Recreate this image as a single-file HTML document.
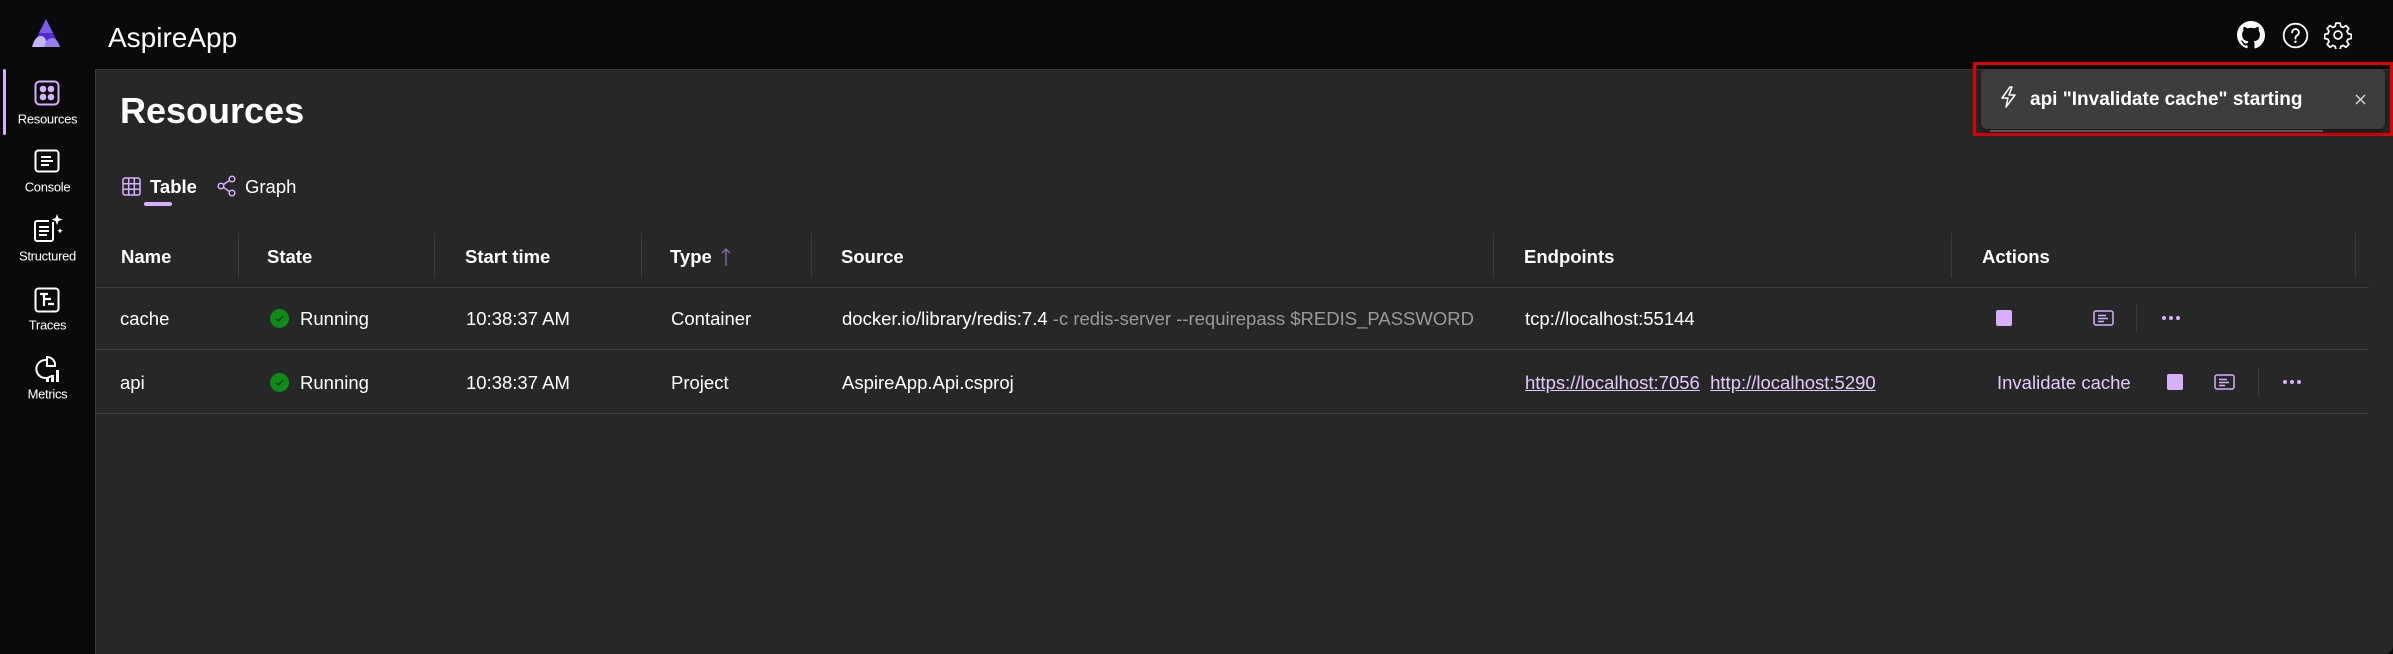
<!DOCTYPE html>
<html><head><meta charset="utf-8">
<style>
*{box-sizing:border-box;margin:0;padding:0}
body{width:2393px;height:654px;background:#0a0a0a;font-family:"Liberation Sans",sans-serif;color:#fff;position:relative;overflow:hidden}
.abs{position:absolute}
.panel{left:95px;top:69px;width:2298px;height:585px;background:#272727;border-left:1px solid #3a3a3a;border-top:1px solid #3a3a3a;border-radius:0 0 8px 0}
.t{font-size:18.5px;color:#fff;white-space:nowrap;transform:translateY(-50%)}
.t.side{width:95px;text-align:center;font-size:13px;color:#fff;left:0;letter-spacing:-0.3px}
.h{font-weight:bold}
.hl{height:1px;background:#3b3b3b;left:96px;width:2273px}
.vd{width:1px;background:#3b3b3b;top:233px;height:45px}
.sq{width:16px;height:16px;background:#d6b0ff;border-radius:2px}
.dot{width:4px;height:4px;border-radius:2px;background:#d6b0ff}
a{color:#e4c8ff;text-decoration:underline}
</style></head><body>
<svg class="abs" style="left:30px;top:18px" width="32" height="30" viewBox="0 0 32 30"><polygon points="16,1 2,29 30,29" fill="#512bd4"/><polygon points="16,1 9,15 23,15" fill="#7b5ce6"/><path d="M2,29 Q5,18 11,18 Q16,18 18,29Z" fill="#c7b6f7"/><path d="M14,29 Q17,20 22,20 Q27,20 30,29Z" fill="#9a7ef0"/></svg>
<div class="abs t" style="left:108px;top:38px;font-size:28px">AspireApp</div>
<svg class="abs" style="left:2237px;top:21px" width="28" height="28" viewBox="0 0 16 16"><path fill="#fff" d="M8 0C3.58 0 0 3.58 0 8c0 3.54 2.29 6.53 5.47 7.59.4.07.55-.17.55-.38v-1.33c-2.23.48-2.7-1.07-2.7-1.07-.36-.92-.89-1.17-.89-1.17-.73-.5.06-.49.06-.49.8.06 1.23.83 1.23.83.72 1.23 1.88.87 2.34.67.07-.52.28-.87.51-1.07-1.78-.2-3.64-.89-3.64-3.95 0-.87.31-1.59.82-2.15-.08-.2-.36-1.02.08-2.12 0 0 .67-.21 2.2.82.64-.18 1.32-.27 2-.27s1.36.09 2 .27c1.53-1.04 2.2-.82 2.2-.82.44 1.1.16 1.92.08 2.12.51.56.82 1.27.82 2.15 0 3.07-1.87 3.75-3.65 3.95.29.25.54.73.54 1.48v2.2c0 .21.15.46.55.38A8 8 0 0016 8c0-4.42-3.58-8-8-8z"/></svg>
<svg class="abs" style="left:2282px;top:22px" width="27" height="27" viewBox="0 0 24 24"><circle cx="12" cy="12" r="10.5" fill="none" stroke="#fff" stroke-width="1.6"/><path d="M9 9.3a3 3 0 1 1 4.3 2.7c-.9.5-1.3 1-1.3 2v.8" fill="none" stroke="#fff" stroke-width="1.6" stroke-linecap="round"/><circle cx="12" cy="17.6" r="1.1" fill="#fff"/></svg>
<svg class="abs" style="left:2324px;top:21px" width="28" height="28" viewBox="0 0 24 24"><path fill="none" stroke="#fff" stroke-width="1.5" stroke-linejoin="round" d="M10.2 1.8h3.6l.6 2.8 2 .9 2.4-1.6 2.5 2.5-1.6 2.4.9 2 2.8.6v3.6l-2.8.6-.9 2 1.6 2.4-2.5 2.5-2.4-1.6-2 .9-.6 2.8h-3.6l-.6-2.8-2-.9-2.4 1.6-2.5-2.5 1.6-2.4-.9-2-2.8-.6v-3.6l2.8-.6.9-2-1.6-2.4 2.5-2.5 2.4 1.6 2-.9z"/><circle cx="12" cy="12" r="3.4" fill="none" stroke="#fff" stroke-width="1.5"/></svg>
<div class="abs" style="left:3px;top:69px;width:3px;height:66px;background:#d6b0ff;border-radius:2px"></div>
<svg class="abs" style="left:34px;top:80px" width="26" height="26" viewBox="0 0 26 26"><rect x="1.5" y="1.5" width="23" height="23" rx="4" fill="none" stroke="#d6b0ff" stroke-width="2"/><circle cx="9" cy="9" r="3.3" fill="#d6b0ff"/><circle cx="17" cy="9" r="3.3" fill="#d6b0ff"/><circle cx="9" cy="17" r="3.3" fill="#d6b0ff"/><circle cx="17" cy="17" r="3.3" fill="#d6b0ff"/></svg>
<div class="abs t side" style="top:119px">Resources</div>
<svg class="abs" style="left:34px;top:149px" width="26" height="24" viewBox="0 0 26 24"><rect x="1.5" y="1.5" width="23" height="21" rx="3" fill="none" stroke="#fff" stroke-width="2"/><path d="M7 8h10M7 12h12M7 16h8" stroke="#fff" stroke-width="2"/></svg>
<div class="abs t side" style="top:187px">Console</div>
<svg class="abs" style="left:33px;top:213px" width="30" height="30" viewBox="0 0 30 30"><path d="M20 9V26a2 2 0 0 1-2 2H4a2 2 0 0 1-2-2V10a2 2 0 0 1 2-2h12" fill="none" stroke="#fff" stroke-width="2"/><path d="M6 14h10M6 18h10M6 22h8" stroke="#fff" stroke-width="2"/><path d="M24 1l1.5 4 4 1.5-4 1.5L24 12l-1.5-4-4-1.5 4-1.5z" fill="#fff"/><path d="M27 15l.8 2 2 .8-2 .8-.8 2-.8-2-2-.8 2-.8z" fill="#fff"/></svg>
<div class="abs t side" style="top:256px">Structured</div>
<svg class="abs" style="left:34px;top:287px" width="26" height="26" viewBox="0 0 26 26"><rect x="1.5" y="1.5" width="23" height="23" rx="3" fill="none" stroke="#fff" stroke-width="2"/><path d="M6 7h8M10 7v12M10 12h7M14 17h6" stroke="#fff" stroke-width="2.2"/></svg>
<div class="abs t side" style="top:325px">Traces</div>
<svg class="abs" style="left:34px;top:355px" width="28" height="28" viewBox="0 0 28 28"><path d="M12 5a9 9 0 1 0 5 16" fill="none" stroke="#fff" stroke-width="2"/><path d="M13 2v9h8a8 8 0 0 0-8-9z" fill="none" stroke="#fff" stroke-width="2"/><rect x="17" y="20" width="3" height="7" fill="#fff"/><rect x="22" y="15" width="3" height="12" fill="#fff"/><rect x="12" y="23" width="3" height="4" fill="#fff"/></svg>
<div class="abs t side" style="top:394px">Metrics</div>
<div class="abs panel"></div>
<div class="abs t h" style="left:120px;top:111px;font-size:36px">Resources</div>
<svg class="abs" style="left:122px;top:177px" width="19" height="19" viewBox="0 0 19 19"><rect x="1" y="1" width="17" height="17" rx="2" fill="none" stroke="#d6b0ff" stroke-width="1.5"/><path d="M1 6.7h17M1 12.3h17M6.7 1v17M12.3 1v17" stroke="#d6b0ff" stroke-width="1.5"/></svg>
<div class="abs t h" style="left:150px;top:187px">Table</div>
<div class="abs" style="left:144px;top:202px;width:28px;height:4px;background:#d6b0ff;border-radius:2px"></div>
<svg class="abs" style="left:217px;top:175px" width="20" height="22" viewBox="0 0 20 22"><circle cx="15" cy="4" r="2.8" fill="none" stroke="#d6b0ff" stroke-width="1.5"/><circle cx="4" cy="11" r="2.8" fill="none" stroke="#d6b0ff" stroke-width="1.5"/><circle cx="15" cy="18" r="2.8" fill="none" stroke="#d6b0ff" stroke-width="1.5"/><path d="M6.5 9.5l6-4M6.5 12.5l6 4" stroke="#d6b0ff" stroke-width="1.5"/></svg>
<div class="abs t" style="left:245px;top:187px">Graph</div>
<div class="abs t h" style="left:121px;top:257px">Name</div>
<div class="abs vd" style="left:238px"></div>
<div class="abs t h" style="left:267px;top:257px">State</div>
<div class="abs vd" style="left:434px"></div>
<div class="abs t h" style="left:465px;top:257px">Start time</div>
<div class="abs vd" style="left:641px"></div>
<div class="abs t h" style="left:670px;top:257px">Type</div>
<svg class="abs" style="left:721px;top:247px" width="10" height="20" viewBox="0 0 10 20"><path d="M5 19V2M1 6l4-4 4 4" fill="none" stroke="#8a6fa8" stroke-width="1.3"/></svg>
<div class="abs vd" style="left:811px"></div>
<div class="abs t h" style="left:841px;top:257px">Source</div>
<div class="abs vd" style="left:1493px"></div>
<div class="abs t h" style="left:1524px;top:257px">Endpoints</div>
<div class="abs vd" style="left:1951px"></div>
<div class="abs t h" style="left:1982px;top:257px">Actions</div>
<div class="abs vd" style="left:2355px"></div>
<div class="abs hl" style="top:287px"></div>
<div class="abs hl" style="top:349px"></div>
<div class="abs hl" style="top:413px"></div>
<div class="abs t" style="left:120px;top:319px">cache</div>
<svg class="abs" style="left:270px;top:309px" width="19" height="19" viewBox="0 0 19 19"><circle cx="9.5" cy="9.5" r="9.5" fill="#0e8a16"/><path d="M6 9.8l2.3 2.2 4.7-4.7" fill="none" stroke="#0b3d0e" stroke-width="1.3"/></svg>
<div class="abs t" style="left:300px;top:319px">Running</div>
<div class="abs t" style="left:466px;top:319px">10:38:37 AM</div>
<div class="abs t" style="left:671px;top:319px">Container</div>
<div class="abs t" style="left:842px;top:319px">docker.io/library/redis:7.4 <span style="color:#9a9a9a">-c redis-server --requirepass $REDIS_PASSWORD</span></div>
<div class="abs t" style="left:1525px;top:319px">tcp://localhost:55144</div>
<div class="abs sq" style="left:1996px;top:310px"></div>
<svg class="abs" style="left:2093px;top:310px" width="21" height="16" viewBox="0 0 21 16"><rect x="1" y="1" width="19" height="14" rx="2" fill="none" stroke="#d6b0ff" stroke-width="1.5"/><path d="M5 5.5h8M5 8.5h10M5 11.5h6" stroke="#d6b0ff" stroke-width="1.4"/></svg>
<div class="abs" style="left:2136px;top:304px;width:1px;height:28px;background:#3b3b3b"></div>
<div class="abs dot" style="left:2162px;top:316px"></div><div class="abs dot" style="left:2169px;top:316px"></div><div class="abs dot" style="left:2176px;top:316px"></div>
<div class="abs t" style="left:120px;top:383px">api</div>
<svg class="abs" style="left:270px;top:373px" width="19" height="19" viewBox="0 0 19 19"><circle cx="9.5" cy="9.5" r="9.5" fill="#0e8a16"/><path d="M6 9.8l2.3 2.2 4.7-4.7" fill="none" stroke="#0b3d0e" stroke-width="1.3"/></svg>
<div class="abs t" style="left:300px;top:383px">Running</div>
<div class="abs t" style="left:466px;top:383px">10:38:37 AM</div>
<div class="abs t" style="left:671px;top:383px">Project</div>
<div class="abs t" style="left:842px;top:383px">AspireApp.Api.csproj</div>
<div class="abs t" style="left:1525px;top:383px"><a>https://localhost:7056</a>&nbsp; <a>http://localhost:5290</a></div>
<div class="abs t" style="left:1997px;top:383px;color:#e4c8ff">Invalidate cache</div>
<div class="abs sq" style="left:2167px;top:374px"></div>
<svg class="abs" style="left:2214px;top:374px" width="21" height="16" viewBox="0 0 21 16"><rect x="1" y="1" width="19" height="14" rx="2" fill="none" stroke="#d6b0ff" stroke-width="1.5"/><path d="M5 5.5h8M5 8.5h10M5 11.5h6" stroke="#d6b0ff" stroke-width="1.4"/></svg>
<div class="abs" style="left:2258px;top:368px;width:1px;height:28px;background:#3b3b3b"></div>
<div class="abs dot" style="left:2283px;top:380px"></div><div class="abs dot" style="left:2290px;top:380px"></div><div class="abs dot" style="left:2297px;top:380px"></div>
<div class="abs" style="left:1973px;top:62px;width:420px;height:74px;border:3px solid #e00000"></div>
<div class="abs" style="left:1981px;top:69px;width:404px;height:60px;background:#3d3d3d;border-radius:6px;box-shadow:0 2px 6px rgba(0,0,0,.5)"></div>
<div class="abs" style="left:1990px;top:130px;width:333px;height:2px;background:#555"></div>
<svg class="abs" style="left:1999px;top:86px" width="18" height="22" viewBox="0 0 18 22"><path d="M11 1L3 12h6l-2 9 9-12h-6l3-8z" fill="none" stroke="#fff" stroke-width="1.5" stroke-linejoin="round"/></svg>
<div class="abs t h" style="left:2030px;top:100px;font-size:19px">api "Invalidate cache" starting</div>
<svg class="abs" style="left:2355px;top:94px" width="11" height="11" viewBox="0 0 11 11"><path d="M1 1l9 9M10 1l-9 9" stroke="#ddd" stroke-width="1.3"/></svg>
</body></html>
